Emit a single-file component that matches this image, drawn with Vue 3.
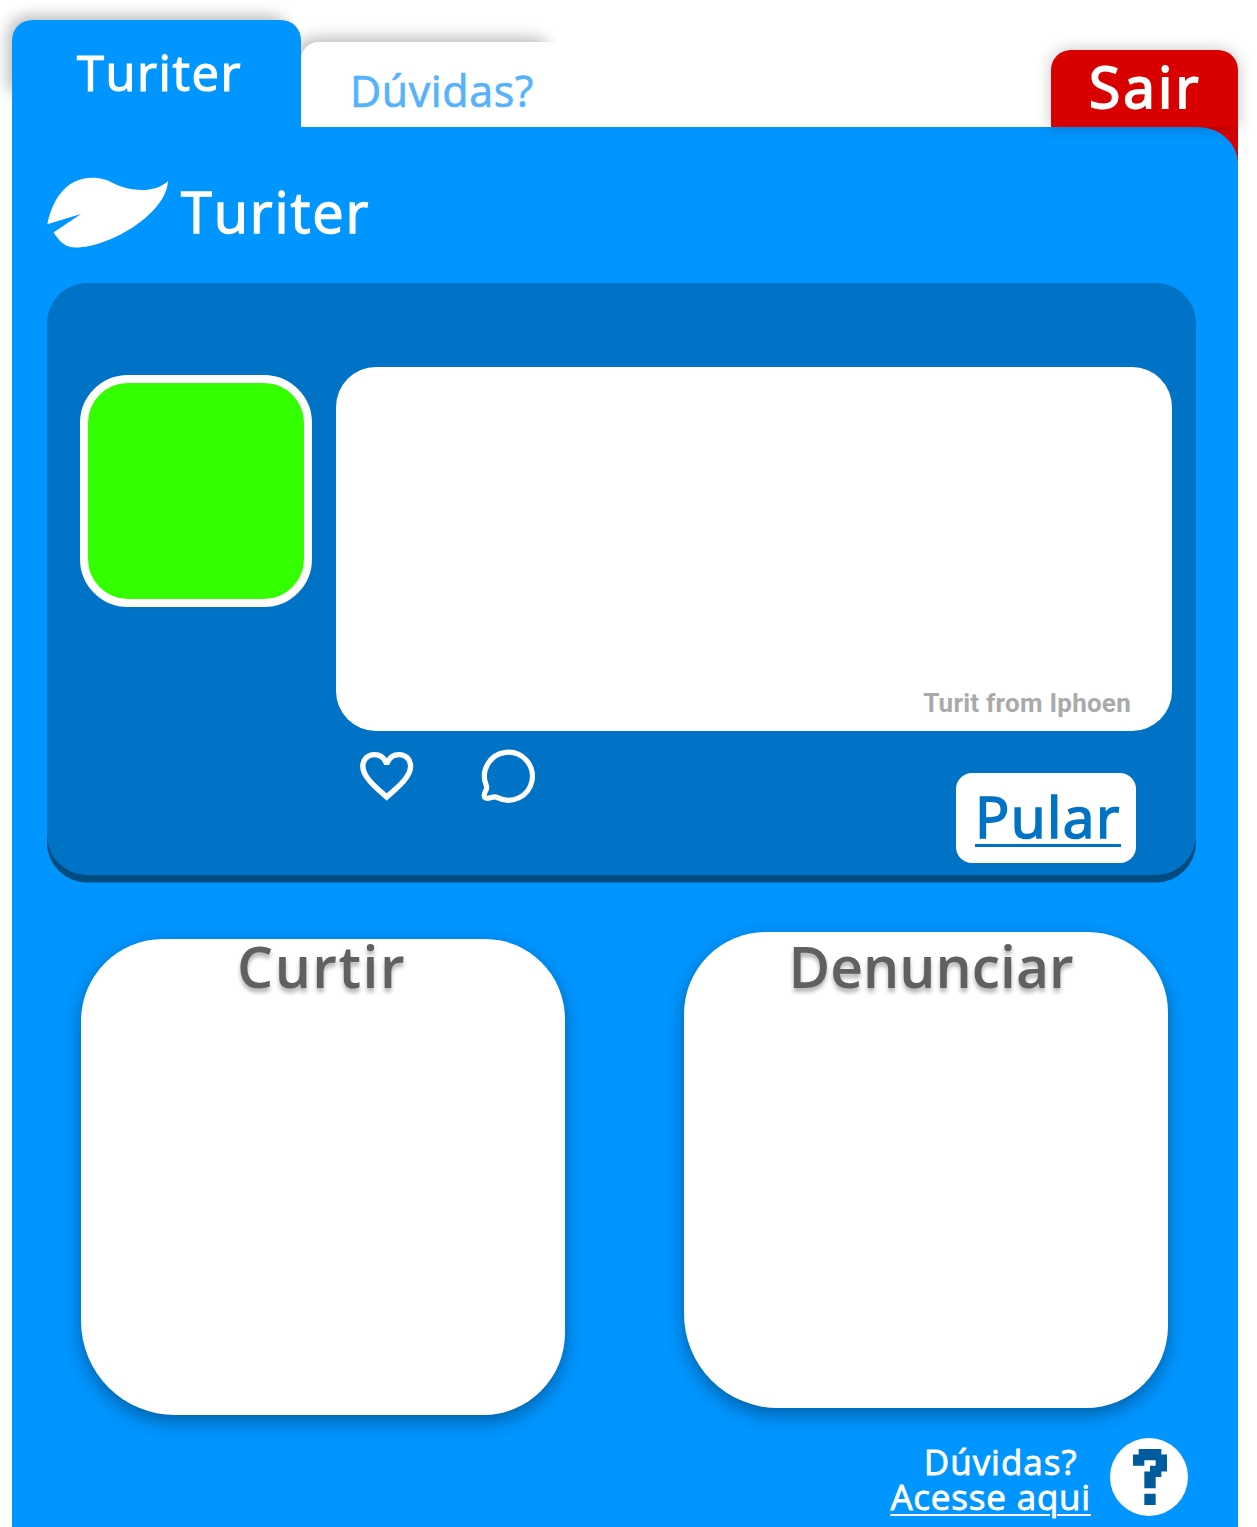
<script setup>
const actions = [
  { title: 'Curtir', kind: 'like' },
  { title: 'Denunciar', kind: 'report' },
]
</script>

<template>
  <div class="page">
    <nav class="tabs">
      <a class="tab tab-active"><span>Turiter</span></a>
      <a class="tab tab-help"><span>Dúvidas?</span></a>
      <a class="exit"><span>Sair</span></a>
    </nav>
    <div class="body">
      <main class="panel">
        <header class="brand">
          <svg class="leaf" width="122" height="72" viewBox="0 0 122 72">
            <path fill="#fff" d="M.3 47.3C6 20 21 .8 45 .8c10 0 16 2.7 22 5.800c16 8 41 10 54 -2.600C119.500 37 62 70.500 29 70.500C18 70.500 13 65 6.500 55.500L34 37Z" />
          </svg>
          <span class="brand-name">Turiter</span>
        </header>

        <section class="card">
          <div class="avatar"></div>
          <div class="content">
            <div class="post"><span class="from">Turit from Iphoen</span></div>
            <div class="controls">
              <svg class="heart" width="56" height="52" viewBox="0 0 56 52">
                <path fill="none" stroke="#fff" stroke-width="5.400" d="M27.700 47C20 40 3.800 28 3.800 16.200C3.800 9 9 4.600 15.500 4.600C21 4.600 25 8 27 12.400H28.400C30.400 8 34.500 4.600 40 4.600C46.500 4.600 51.600 9 51.600 16.200C51.600 28 35.400 40 27.700 47Z" />
              </svg>
              <svg class="bubble" width="56" height="56" viewBox="0 0 56 56">
                <path fill="none" stroke="#fff" stroke-width="5.200" stroke-linejoin="round" d="M7.300 37.500A24 24 0 1 1 18.500 49.600C14.500 47.500 12 50.500 8 50.300C3.500 50 5.400 45 6.800 42.500C7.700 41 8 39.500 7.300 37.500Z" />
              </svg>
              <a class="skip"><span>Pular</span></a>
            </div>
          </div>
        </section>

        <section class="choices">
          <div v-for="a in actions" :key="a.kind" class="choice" :class="a.kind">
            <h2>{{ a.title }}</h2>
          </div>
        </section>

        <footer class="help">
          <div class="help-text">
            <span class="help-q">Dúvidas?</span>
            <a class="help-link">Acesse aqui</a>
          </div>
          <div class="badge">
            <svg width="34" height="56" viewBox="0 0 6 10" preserveAspectRatio="none">
              <path fill="#005a9e" d="M1 0h4v1h1v3h-1v1h-1v2h-2v-3h1v-1h1v-1h-2v1h-2v-2h1zM2 8h2v2h-2z" />
            </svg>
          </div>
        </footer>
      </main>
    </div>
  </div>
</template>

<style>
body { margin: 0; background: #fff; }
</style>

<style scoped>
.page {
  box-sizing: border-box;
  width: 1257px;
  height: 1527px;
  padding: 20px 19px 0 12px;
  overflow: hidden;
  background: #fff;
  font-family: "Open Sans", "Noto Sans", sans-serif;
  font-weight: 400;
  line-height: 1;
  color: #fff;
}
.tabs { display: flex; height: 107px; }
.tab, .exit { box-sizing: border-box; white-space: nowrap; }
.tab {
  position: relative;
}
.tab::before, .tab::after {
  content: "";
  position: absolute;
  z-index: -1;
  inset: 0;
  border-radius: inherit;
}
.tab-active {
  z-index: 2;
  width: 289px;
  padding: 28px 0 0 65px;
  border-radius: 20px 20px 0 0;
  font-size: 49px;
  letter-spacing: 1.500px;
  -webkit-text-stroke: 1.200px #fff;
}
.tab-active::before {
  inset: 0 8px 32px 0;
  box-shadow: -4px -4px 15px rgba(0, 0, 0, .28);
  clip-path: inset(-25px 0 -25px -25px);
}
.tab-active::after { background: #0095ff; }
.tab-help {
  z-index: 1;
  width: 267px;
  margin-top: 22px;
  padding: 27px 0 0 49px;
  border-radius: 18px 20px 0 0;
  color: #55b3fb;
  font-size: 43px;
  letter-spacing: .6px;
  -webkit-text-stroke: .7px #55b3fb;
}
.tab-help::before {
  inset: 0 12px 40px 0;
  box-shadow: -4px -4px 15px rgba(0, 0, 0, .28);
  clip-path: inset(-25px 0 0 0);
}
.tab-help::after { background: #fff; }
.exit {
  position: relative;
  z-index: 3;
  width: 187px;
  margin: 30px 0 0 auto;
  padding: 8px 0 0 38px;
  border-radius: 20px 20px 0 0;
  background: #d90000;
  box-shadow: 0 0 16px rgba(0, 0, 0, .24);
  font-size: 57px;
  letter-spacing: 3px;
  -webkit-text-stroke: 1.900px #fff;
}
.body {
  background: linear-gradient(#d90000, #d90000) right top / 60px 50px no-repeat;
}
.panel {
  box-sizing: border-box;
  height: 1399.600px;
  padding: 50px 42px 0 35px;
  border-top-right-radius: 40px 37px;
  background: #0095ff;
}
.brand { display: flex; height: 106px; }
.brand-name {
  margin: 6px 0 0 12px;
  font-size: 56px;
  letter-spacing: 1.800px;
  -webkit-text-stroke: 1.300px #fff;
}
.card {
  box-sizing: border-box;
  display: flex;
  width: 1149px;
  height: 592px;
  padding: 84px 24px 0 33px;
  border-radius: 40px;
  background: #0073c6;
  box-shadow: 0 7.500px #004b80;
}
.avatar {
  box-sizing: border-box;
  width: 232px;
  height: 232px;
  margin: 8px 24px 0 0;
  border: 8px solid #fff;
  border-radius: 48px;
  background: #3f0;
}
.post {
  display: flex;
  align-items: flex-end;
  justify-content: flex-end;
  box-sizing: border-box;
  width: 836px;
  height: 364px;
  padding: 0 41px 15px 0;
  border-radius: 40px;
  background: #fff;
}
.from { font: 700 26px/1 Roboto, sans-serif; letter-spacing: .25px; color: #aaa; }
.controls { display: flex; }
.heart { margin: 19px 0 0 23px; }
.bubble { margin: 17px 0 0 64px; }
.skip {
  box-sizing: border-box;
  width: 180px;
  height: 90px;
  margin: 42.400px 36px 0 auto;
  padding: 15px 0 0 19px;
  border-radius: 16px;
  background: #fff;
  color: #0073c6;
  font-size: 57px;
  letter-spacing: 1.400px;
  -webkit-text-stroke: 1.700px #0073c6;
}
.skip span { border-bottom: 3px solid #0073c6; display: inline-block; height: 56px; }
.choices { display: flex; justify-content: space-between; padding: 57px 28px 0 33.500px; }
.choice {
  width: 484px;
  height: 476px;
  border-radius: 82px 80px 82px 94px;
  background: #fff;
  box-shadow: 0 7px 18px rgba(0, 0, 0, .34);
}
.like { margin-top: 6.500px; }
h2 {
  margin: 0;
  text-align: center;
  color: #606060;
  font-size: 57px;
  font-weight: 600;
  line-height: 57px;
  text-shadow: 0 4px 4px rgba(0, 0, 0, .3);
}
.like h2 { letter-spacing: 1.500px; transform: translate(-1px, -1px); }
.report h2 { transform: translate(5px, 6px); }
.help { display: flex; justify-content: flex-end; padding: 23.500px 8px 0 0; }
.help-text {
  display: flex;
  flex-direction: column;
  align-items: center;
  margin-right: 19px;
  padding-top: 6px;
  font-size: 35px;
  -webkit-text-stroke: .8px #fff;
}
.help-q { margin-left: 20px; line-height: 35px; letter-spacing: 1px; }
.help-link {
  line-height: 35px;
  letter-spacing: .8px;
  text-decoration: underline 1.500px;
  text-underline-offset: 4px;
}
.badge {
  display: flex;
  align-items: center;
  justify-content: center;
  width: 78px;
  height: 78px;
  border-radius: 50%;
  background: #fff;
}
.badge svg { margin-left: 2px; }
</style>
